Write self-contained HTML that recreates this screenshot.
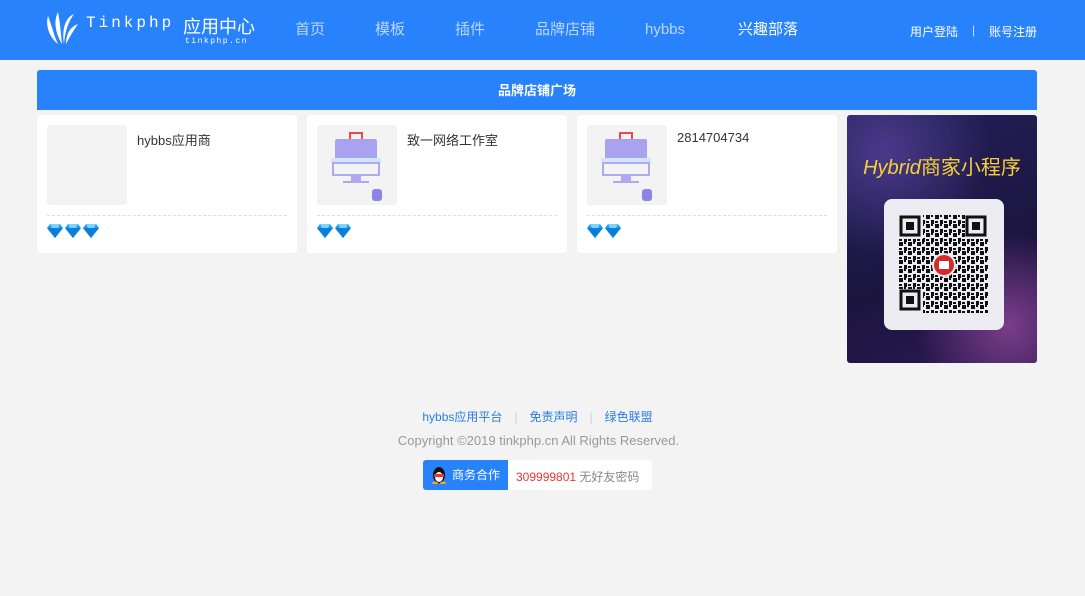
<!DOCTYPE html>
<html><head><meta charset="utf-8"><style>
*{margin:0;padding:0;box-sizing:border-box}
body{width:1085px;height:596px;background:#f3f3f3;font-family:"Liberation Sans","Noto Sans CJK SC",sans-serif;position:relative;overflow:hidden}
.hd{position:absolute;left:0;top:0;width:1085px;height:60px;background:#2882fc}
.nav span{position:absolute;top:20px;height:20px;line-height:20px;font-size:15px;color:#bcd7ff}
.rt{position:absolute;top:23px;font-size:12px;color:#fff}
.bar{position:absolute;left:37px;top:70px;width:1000px;height:40px;background:#2882fc;border-radius:3px 3px 0 0;color:#fff;font-size:13px;font-weight:bold;text-align:center;line-height:42px}
.card{position:absolute;top:115px;width:260px;height:138px;background:#fff;border-radius:3px}
.thumb{position:absolute;left:10px;top:10px;width:80px;height:80px;background:#f3f3f3;border-radius:3px}
.nm{position:absolute;left:100px;top:15px;font-size:13px;color:#333}
.ln{position:absolute;left:10px;right:10px;top:100px;border-top:1px dashed #ddd}
.dm{position:absolute;left:10px;top:109px;display:flex;gap:2px}
.ad{position:absolute;left:847px;top:115px;width:190px;height:248px;border-radius:3px;background:radial-gradient(circle at 20% 15%,#4a3a8a,transparent 40%),radial-gradient(circle at 85% 85%,#7a3d8a,transparent 35%),linear-gradient(160deg,#23205a,#1c1540 60%,#2a1850);overflow:hidden}
.ad .t{position:absolute;top:36px;width:100%;text-align:center;color:#f7d135;font-size:20px}
.qr{position:absolute;left:37px;top:84px;width:120px;height:131px;background:#ececf2;border-radius:8px}
.ft{position:absolute;width:1085px;text-align:center}
</style></head><body>
<div class="hd">
 <svg style="position:absolute;left:44px;top:10px" width="36" height="36" viewBox="0 0 36 36"><path d="M4 6c-3 10 2 22 10 28-4-8-6-18-10-28z M14 2c-5 10-2 22 4 32-1-10-2-22-4-32z M30 4c-10 4-12 18-10 30 1-12 4-22 10-30z M34 14c-8 3-12 10-12 20 4-8 8-14 12-20z" fill="#fff"/></svg>
 <div style="position:absolute;left:86px;top:14px;color:#fff;font-size:16px;letter-spacing:3px;font-family:'Liberation Mono',monospace">Tinkphp</div>
 <div style="position:absolute;left:183px;top:13px;color:#fff;font-size:18px">应用中心</div>
 <div style="position:absolute;left:185px;top:37px;color:#fff;font-size:8px;letter-spacing:1.5px;font-family:'Liberation Mono',monospace">tinkphp.cn</div>
 <div class="nav"><span style="left:295px">首页</span><span style="left:375px">模板</span><span style="left:455px">插件</span><span style="left:535px">品牌店铺</span><span style="left:645px">hybbs</span><span style="left:738px;color:#fff">兴趣部落</span></div>
 <div class="rt" style="left:910px">用户登陆</div><div class="rt" style="left:972px;color:#cfe2ff">|</div><div class="rt" style="left:989px">账号注册</div>
</div>
<div class="bar">品牌店铺广场</div>
<svg width="0" height="0" style="position:absolute"><defs><symbol id="d" viewBox="0 0 16 14"><path d="M3 0h10l3 4-8 10L0 4z" fill="#1ea0f2"/><path d="M0 4h16L8 14z" fill="#0b7fd8"/><path d="M3 0h10l-2 4H5z" fill="#7fd2ff"/></symbol></defs></svg>
<div class="card" style="left:37px"><div class="thumb"></div><div class="nm">hybbs应用商</div><div class="ln"></div><div class="dm"><svg width="16" height="14"><use href="#d"/></svg><svg width="16" height="14"><use href="#d"/></svg><svg width="16" height="14"><use href="#d"/></svg></div></div>
<div class="card" style="left:307px"><div class="thumb"><svg width="80" height="80" viewBox="0 0 80 80"><rect x="33" y="8" width="12" height="8" fill="none" stroke="#f04848" stroke-width="2"/><rect x="18" y="14" width="42" height="22" fill="#a9a2ee" rx="2"/><rect x="14" y="33" width="50" height="5" fill="#cfe6ff"/><rect x="16" y="38" width="46" height="12" fill="none" stroke="#b0a8f0" stroke-width="2"/><rect x="34" y="50" width="10" height="6" fill="#b0a8f0"/><path d="M26 57h26" stroke="#b0a8f0" stroke-width="2"/><rect x="55" y="64" width="10" height="12" rx="3" fill="#8e84e6"/></svg></div><div class="nm">致一网络工作室</div><div class="ln"></div><div class="dm"><svg width="16" height="14"><use href="#d"/></svg><svg width="16" height="14"><use href="#d"/></svg></div></div>
<div class="card" style="left:577px"><div class="thumb"><svg width="80" height="80" viewBox="0 0 80 80"><rect x="33" y="8" width="12" height="8" fill="none" stroke="#f04848" stroke-width="2"/><rect x="18" y="14" width="42" height="22" fill="#a9a2ee" rx="2"/><rect x="14" y="33" width="50" height="5" fill="#cfe6ff"/><rect x="16" y="38" width="46" height="12" fill="none" stroke="#b0a8f0" stroke-width="2"/><rect x="34" y="50" width="10" height="6" fill="#b0a8f0"/><path d="M26 57h26" stroke="#b0a8f0" stroke-width="2"/><rect x="55" y="64" width="10" height="12" rx="3" fill="#8e84e6"/></svg></div><div class="nm">2814704734</div><div class="ln"></div><div class="dm"><svg width="16" height="14"><use href="#d"/></svg><svg width="16" height="14"><use href="#d"/></svg></div></div>
<div class="ad"><div class="t"><i>Hybrid</i>商家小程序</div>
<div class="qr"><svg style="position:absolute;left:15px;top:16px" width="90" height="98" viewBox="0 0 90 98">
<defs><pattern id="p" width="9" height="9" patternUnits="userSpaceOnUse"><rect width="4" height="4" fill="#111"/><rect x="5" y="5" width="3" height="4" fill="#111"/><rect x="5" y="0" width="2" height="2" fill="#111"/><rect x="0" y="6" width="3" height="2" fill="#111"/></pattern></defs>
<rect width="90" height="98" fill="url(#p)"/>
<g fill="#ececf2"><rect width="24" height="24"/><rect x="66" width="24" height="24"/><rect y="74" width="24" height="24"/></g>
<g fill="none" stroke="#111" stroke-width="3"><rect x="2" y="2" width="18" height="18"/><rect x="68" y="2" width="18" height="18"/><rect x="2" y="76" width="18" height="18"/></g>
<g fill="#111"><rect x="7" y="7" width="8" height="8"/><rect x="73" y="7" width="8" height="8"/><rect x="7" y="81" width="8" height="8"/></g>
<circle cx="45" cy="50" r="12" fill="#ececf2"/><circle cx="45" cy="50" r="10" fill="#d42a2a"/><rect x="40" y="46" width="10" height="8" fill="#fff"/>
</svg></div></div>
<div class="ft" style="top:408px;font-size:12px;color:#2a7de1;padding-right:10px"><span>hybbs应用平台</span><span style="color:#ccc;margin:0 12px">|</span><span>免责声明</span><span style="color:#ccc;margin:0 12px">|</span><span>绿色联盟</span></div>
<div class="ft" style="top:433px;font-size:13px;color:#999;padding-right:8px">Copyright ©2019 tinkphp.cn All Rights Reserved.</div>
<div style="position:absolute;left:423px;top:460px;width:229px;height:30px;background:#fff;border-radius:3px">
 <div style="position:absolute;left:0;top:0;width:85px;height:30px;background:#2882fc;border-radius:3px 0 0 3px;color:#fff;font-size:12px;line-height:30px;padding-left:29px">商务合作</div>
 <svg style="position:absolute;left:8px;top:6px" width="16" height="18" viewBox="0 0 16 18"><ellipse cx="8" cy="9" rx="6" ry="8" fill="#111"/><ellipse cx="8" cy="11" rx="4" ry="5" fill="#fff"/><rect x="3" y="8" width="10" height="3" fill="#e33"/><ellipse cx="4" cy="17" rx="3" ry="1.5" fill="#f5a623"/><ellipse cx="12" cy="17" rx="3" ry="1.5" fill="#f5a623"/></svg>
 <div style="position:absolute;left:93px;top:8px;font-size:12px;color:#e33">309999801 <span style="color:#888">无好友密码</span></div>
</div>
</body></html>
